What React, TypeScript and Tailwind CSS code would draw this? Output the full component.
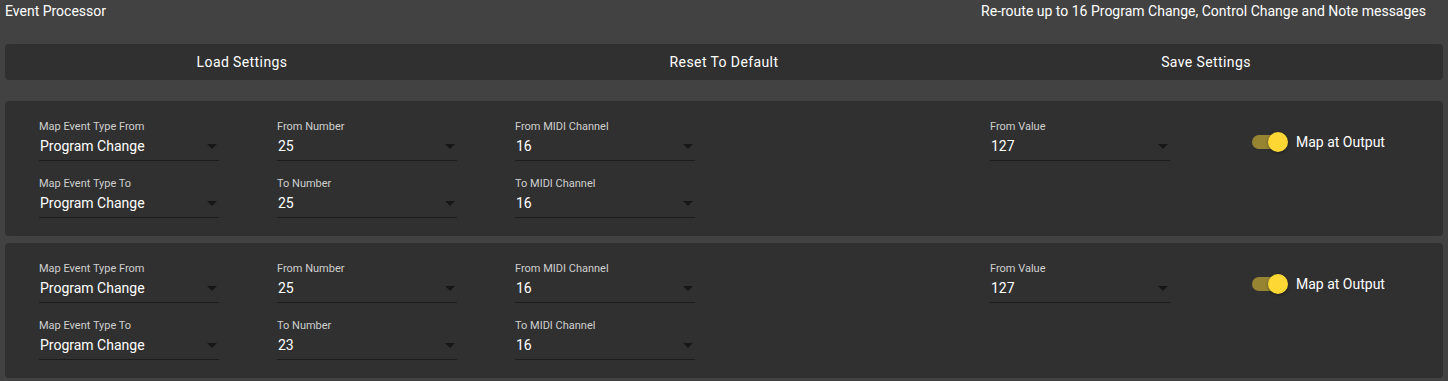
import React from 'react';

type Field = { label: string; value: string };

type Mapping = {
  from: Field[];
  to: Field[];
  fromValue: string;
  mapAtOutput: boolean;
};

const mappings: Mapping[] = [
  {
    from: [
      { label: 'Map Event Type From', value: 'Program Change' },
      { label: 'From Number', value: '25' },
      { label: 'From MIDI Channel', value: '16' },
    ],
    to: [
      { label: 'Map Event Type To', value: 'Program Change' },
      { label: 'To Number', value: '25' },
      { label: 'To MIDI Channel', value: '16' },
    ],
    fromValue: '127',
    mapAtOutput: true,
  },
  {
    from: [
      { label: 'Map Event Type From', value: 'Program Change' },
      { label: 'From Number', value: '25' },
      { label: 'From MIDI Channel', value: '16' },
    ],
    to: [
      { label: 'Map Event Type To', value: 'Program Change' },
      { label: 'To Number', value: '23' },
      { label: 'To MIDI Channel', value: '16' },
    ],
    fromValue: '127',
    mapAtOutput: true,
  },
];

function SelectField({ label, value }: Field) {
  return (
    <div className="w-[180px]">
      <div className="text-[11px] leading-[13px] text-[#cfcfcf]">{label}</div>
      <div className="flex h-[28px] items-center justify-between border-b border-[#1c1c1c] pl-[1px] pr-[1px]">
        <span className="text-[14px] text-white">{value}</span>
        {/* dropdown caret */}
        <svg width="10" height="5" viewBox="0 0 10 5" className="mr-[1px]">
          <path d="M0 0h10L5 5z" fill="#161616" />
        </svg>
      </div>
    </div>
  );
}

function Toggle({ on, label }: { on: boolean; label: string }) {
  return (
    <div className="ml-[24px] mt-[12px] flex h-[20px] items-center gap-[8px]">
      <div className="relative h-[20px] w-[36px]">
        <div className="absolute left-0 top-[3px] h-[14px] w-[34px] rounded-full bg-[#968432]" />
        <div
          className={
            on
              ? 'absolute right-0 top-0 h-[20px] w-[20px] rounded-full bg-[#fdd835] shadow-[0_1px_3px_rgba(0,0,0,0.4)]'
              : 'absolute left-0 top-0 h-[20px] w-[20px] rounded-full bg-[#fafafa] shadow-[0_1px_3px_rgba(0,0,0,0.4)]'
          }
        />
      </div>
      <span className="text-[14px] text-white">{label}</span>
    </div>
  );
}

function MappingPanel({ m }: { m: Mapping }) {
  return (
    <div className="rounded-[4px] bg-[#303030] pb-[18px] pl-[34px] pt-[19px]">
      <div className="flex">
        <div className="flex flex-col gap-[16px]">
          <div className="flex">
            {m.from.map((f) => (
              <div key={f.label} className="w-[238px]">
                <SelectField {...f} />
              </div>
            ))}
          </div>
          <div className="flex">
            {m.to.map((f) => (
              <div key={f.label} className="w-[238px]">
                <SelectField {...f} />
              </div>
            ))}
          </div>
        </div>
        {/* empty column */}
        <div className="w-[237px]" />
        <div className="w-[238px]">
          <SelectField label="From Value" value={m.fromValue} />
        </div>
        <Toggle on={m.mapAtOutput} label="Map at Output" />
      </div>
    </div>
  );
}

export default function App() {
  return (
    <div
      className="min-h-[381px] bg-[#424242] px-[5px] text-white"
      style={{ fontFamily: 'Roboto, "Noto Sans", sans-serif' }}
    >
      <div className="flex h-[22px] items-center justify-between pr-[17px] text-[14px]">
        <span>Event Processor</span>
        <span>Re-route up to 16 Program Change, Control Change and Note messages</span>
      </div>

      <div className="mt-[22px] flex h-[36px] justify-center rounded-[4px] bg-[#303030] text-[14px] tracking-[0.4px]">
        <button className="w-[482px] shrink-0 text-white">Load Settings</button>
        <button className="w-[482px] shrink-0 text-white">Reset To Default</button>
        <button className="w-[482px] shrink-0 text-white">Save Settings</button>
      </div>

      <div className="mt-[21px] flex flex-col gap-[7px]">
        {mappings.map((m, i) => (
          <MappingPanel key={i} m={m} />
        ))}
      </div>
    </div>
  );
}
